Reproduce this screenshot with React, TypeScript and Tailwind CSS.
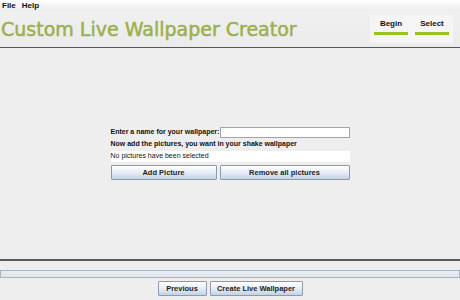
import React from "react";

function Btn({ children, className = "" }: { children: React.ReactNode; className?: string }) {
  return (
    <div
      className={
        "flex items-center justify-center border border-[#8d9aab] rounded-[1px] bg-gradient-to-b from-[#ffffff] via-[#e6edf6] to-[#c3d2e6] text-[7.5px] font-bold text-[#222] " +
        className
      }
    >
      {children}
    </div>
  );
}

export default function App() {
  return (
    <div className="w-[460px] h-[300px] bg-[#eeeeee] flex flex-col overflow-hidden" style={{ fontFamily: '"Liberation Sans", Arial, sans-serif' }}>
      {/* menubar */}
      <div className="h-[11px] flex items-center gap-[6px] pl-[2px] bg-gradient-to-b from-white to-[#ececec] text-[8px] font-bold text-[#111]">
        <span>File</span>
        <span>Help</span>
      </div>
      {/* header */}
      <div className="h-[37px] flex items-center justify-between bg-gradient-to-b from-[#f0f0f0] to-[#ebebeb] border-b border-[#555]">
        <div
          className="text-[19px] leading-none text-[#9cb04c] pl-[1px] [-webkit-text-stroke:0.5px_#9cb04c]"
          style={{ fontFamily: '"DejaVu Sans", sans-serif', fontWeight: 400 }}
        >
          Custom Live Wallpaper Creator
        </div>
        <div className="mr-[7px] w-[83px] h-[28px] bg-[#f5f5f5] flex items-start justify-between px-[4px] pt-[4px]">
          <div className="flex flex-col items-center w-[34px]">
            <span className="text-[8px] font-bold text-[#111] leading-[10px]">Begin</span>
            <div className="mt-[3px] w-[34px] h-[3px] bg-[#9ac21f]" />
          </div>
          <div className="flex flex-col items-center w-[34px]">
            <span className="text-[8px] font-bold text-[#111] leading-[10px]">Select</span>
            <div className="mt-[3px] w-[34px] h-[3px] bg-[#9ac21f]" />
          </div>
        </div>
      </div>
      {/* main */}
      <div className="flex-1 flex justify-center pt-[78px] border-b-2 border-[#5a5a5a]">
        <div className="w-[239px] flex flex-col text-[7px] text-[#111]">
          <div className="flex items-center justify-between h-[12px]">
            <span className="font-bold">Enter a name for your wallpaper:</span>
            <div className="w-[130px] h-[11px] bg-white border border-[#a4a4a4]" />
          </div>
          <div className="h-[13px] flex items-center font-bold">Now add the pictures, you want in your shake wallpaper</div>
          <div className="h-[11px] flex items-center bg-white">No pictures have been selected</div>
          <div className="flex justify-between mt-[3px]">
            <Btn className="w-[106px] h-[15px]">Add Picture</Btn>
            <Btn className="w-[130px] h-[15px]">Remove all pictures</Btn>
          </div>
        </div>
      </div>
      {/* progress */}
      <div className="pt-[9px]">
        <div className="h-[8px] border border-[#aab4c0] bg-gradient-to-b from-[#e9eef3] to-[#dfe5ec]" />
      </div>
      <div className="flex justify-center gap-[3px] pt-[3px] pb-[4px]">
        <Btn className="w-[49px] h-[15px]">Previous</Btn>
        <Btn className="w-[93px] h-[15px]">Create Live Wallpaper</Btn>
      </div>
    </div>
  );
}
